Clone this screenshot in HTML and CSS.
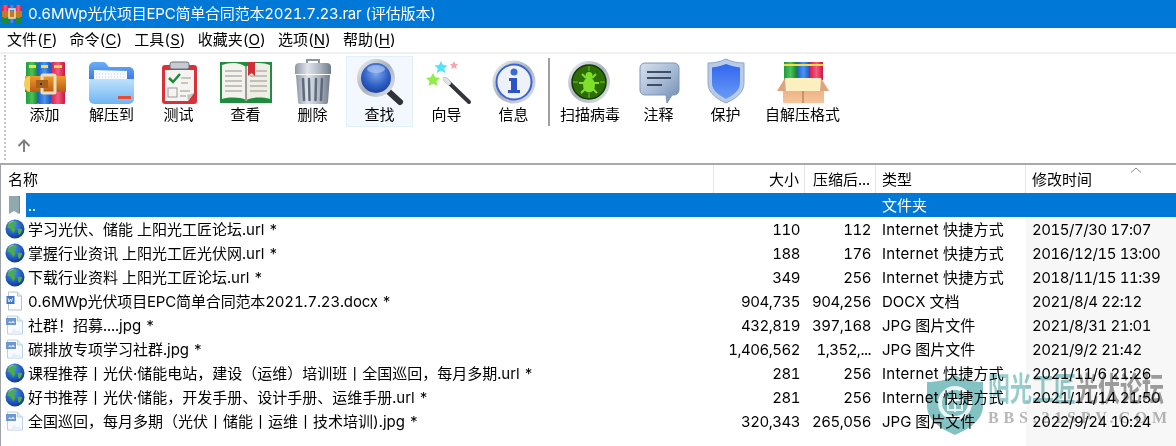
FILE: index.html
```html
<!DOCTYPE html>
<html lang="zh">
<head>
<meta charset="utf-8">
<title>0.6MWp光伏项目EPC简单合同范本2021.7.23.rar</title>
<link rel="stylesheet" href="styles.css">
</head>
<body>
<svg class="defs" width="0" height="0" aria-hidden="true">
  <defs>
    <linearGradient id="gGreen" x1="0" x2="1" y1="0" y2="0"><stop offset="0" stop-color="#1f9a3c"/><stop offset=".5" stop-color="#4cc35a"/><stop offset="1" stop-color="#158033"/></linearGradient>
    <linearGradient id="gBlue" x1="0" x2="1" y1="0" y2="0"><stop offset="0" stop-color="#1d5fd0"/><stop offset=".5" stop-color="#4b93ee"/><stop offset="1" stop-color="#1a55c0"/></linearGradient>
    <linearGradient id="gPink" x1="0" x2="1" y1="0" y2="0"><stop offset="0" stop-color="#d91c4c"/><stop offset=".5" stop-color="#f55a80"/><stop offset="1" stop-color="#c9173f"/></linearGradient>
    <linearGradient id="gBelt" x1="0" x2="0" y1="0" y2="1"><stop offset="0" stop-color="#f09a2c"/><stop offset="1" stop-color="#b85c14"/></linearGradient>
    <linearGradient id="gFolder" x1="0" x2="0" y1="0" y2="1"><stop offset="0" stop-color="#bfe2fb"/><stop offset="1" stop-color="#6fb5f4"/></linearGradient>
    <linearGradient id="gFolderBack" x1="0" x2="0" y1="0" y2="1"><stop offset="0" stop-color="#6aaef5"/><stop offset="1" stop-color="#3a78e6"/></linearGradient>
    <linearGradient id="gMetal" x1="0" x2="1" y1="0" y2="0"><stop offset="0" stop-color="#8d99a8"/><stop offset=".35" stop-color="#dfe4ea"/><stop offset=".7" stop-color="#aab3bf"/><stop offset="1" stop-color="#6f7a89"/></linearGradient>
    <radialGradient id="gLens" cx=".5" cy=".35" r=".7"><stop offset="0" stop-color="#7fa8ee"/><stop offset=".6" stop-color="#2d5fc4"/><stop offset="1" stop-color="#1a3a96"/></radialGradient>
    <linearGradient id="gRing" x1="0" x2="1" y1="0" y2="1"><stop offset="0" stop-color="#f1f3f7"/><stop offset=".5" stop-color="#a8b0bd"/><stop offset="1" stop-color="#e6e9ee"/></linearGradient>
    <linearGradient id="gBubble" x1="0" x2="1" y1="0" y2="1"><stop offset="0" stop-color="#d5e0ef"/><stop offset=".55" stop-color="#a3b7d3"/><stop offset="1" stop-color="#6f88ad"/></linearGradient>
    <linearGradient id="gShield" x1="0" x2="0" y1="0" y2="1"><stop offset="0" stop-color="#2f66ee"/><stop offset="1" stop-color="#6b9bf7"/></linearGradient>
    <linearGradient id="gBox" x1="0" x2="0" y1="0" y2="1"><stop offset="0" stop-color="#eeb386"/><stop offset="1" stop-color="#f8c49c"/></linearGradient>
    <radialGradient id="gGlobe" cx=".4" cy=".3" r=".8"><stop offset="0" stop-color="#4d96ef"/><stop offset=".7" stop-color="#1a4db0"/><stop offset="1" stop-color="#0c2a74"/></radialGradient>
    <symbol id="globe" viewBox="0 0 20 20">
      <circle cx="10" cy="10" r="9.500" fill="url(#gGlobe)"/>
      <path d="M5 3.500c2-1.500 5-1.800 7-1l-1 2.500-2 .5-.5 2.500 2 1.500-1 3-1.500 2-1-3-2.500-2.500-2-.5c.2-2 1-4 2.500-5.500z" fill="#4aae45"/>
      <path d="M12.500 9.500l4.500.5c.3 2-1 4.500-3 6l-1-2.500z" fill="#4aae45"/>
      <path d="M3.500 5a8 8 0 0 1 5-3" fill="none" stroke="#cfe5ff" stroke-opacity=".6"/>
    </symbol>
    <symbol id="imgfile" viewBox="0 0 20 20">
      <path d="M2.500 1h10l5 5v13h-15z" fill="#f8fbfe" stroke="#bcd0e6"/>
      <path d="M12.500 1v5h5" fill="#dfeaf6" stroke="#bcd0e6"/>
      <rect x="1" y="3" width="10" height="7" fill="#6d97d0"/>
      <path d="M3 8l2-2 1.500 1.500 1.500-2 2 2.500z" fill="#d9e6f6"/>
      <path d="M5 19l4-5 3 2.500 2-1.500 3 4z" fill="#e4eefa"/>
    </symbol>
  </defs>
</svg>
<div class="app">
  <header class="titlebar">
    <svg class="title-icon" viewBox="0 0 20 18" width="20" height="18" aria-hidden="true">
      <rect x="0" y="0" width="7" height="18" fill="url(#gPink)"/>
      <rect x="7" y="0" width="6" height="18" fill="url(#gBlue)"/>
      <rect x="13" y="0" width="7" height="18" fill="url(#gPink)"/>
      <rect x="0" y="13" width="7" height="5" fill="#1c8a3a"/>
      <rect x="13" y="13" width="7" height="5" fill="#1c8a3a"/>
      <rect x="0" y="6" width="20" height="6" fill="#c47a1f"/>
      <rect x="7" y="4" width="6" height="9" fill="none" stroke="#efe2b8" stroke-width="1.500"/>
    </svg>
    <span class="title-text">0.6MWp光伏项目EPC简单合同范本2021.7.23.rar (评估版本)</span>
  </header>

  <nav class="menubar">
    <span class="menu-item">文件(<u>F</u>)</span>
    <span class="menu-item">命令(<u>C</u>)</span>
    <span class="menu-item">工具(<u>S</u>)</span>
    <span class="menu-item">收藏夹(<u>O</u>)</span>
    <span class="menu-item">选项(<u>N</u>)</span>
    <span class="menu-item">帮助(<u>H</u>)</span>
  </nav>

  <section class="toolbar">
    <div class="gripper"></div>
    <div class="tool-area">
      <div class="tool-row">
        <div class="tool">
          <svg class="tool-icon" viewBox="0 0 48 48" aria-hidden="true">
            <rect x="5" y="3" width="12" height="42" rx="1" fill="url(#gGreen)"/>
            <rect x="17" y="3" width="13" height="42" rx="1" fill="url(#gBlue)"/>
            <rect x="30" y="3" width="14" height="42" rx="1" fill="url(#gPink)"/>
            <rect x="8" y="6" width="7" height="3" fill="#f3de4a"/>
            <rect x="20" y="6" width="7" height="3" fill="#f3de4a"/>
            <rect x="33" y="6" width="8" height="3" fill="#f3de4a"/>
            <rect x="4" y="17" width="41" height="16" fill="url(#gBelt)"/>
            <path d="M9 17a6 8 0 0 0 0 16z" fill="#f3cf5a"/>
            <rect x="21" y="16" width="13" height="18" rx="1" fill="none" stroke="#e9dfc0" stroke-width="3"/>
            <rect x="15" y="21" width="12" height="8" fill="#a8601a"/>
            <circle cx="20" cy="25" r="1" fill="#2b1a08"/>
          </svg>
          <span class="tool-label">添加</span>
        </div>
        <div class="tool">
          <svg class="tool-icon" viewBox="0 0 48 48" aria-hidden="true">
            <path d="M1 8a5 5 0 0 1 5-5h9c3 0 4 3 6 5h20a5 5 0 0 1 5 5v8H1z" fill="url(#gFolderBack)"/>
            <path d="M6 11l33 1v18H6z" fill="#f6f9fd"/>
            <path d="M8 15h29M8 18h29" stroke="#c7d3e2" stroke-dasharray="1 2"/>
            <path d="M1 20h45v20a5 5 0 0 1-5 5H6a5 5 0 0 1-5-5z" fill="url(#gFolder)"/>
            <rect x="30" y="37" width="13" height="3" fill="#e64b34"/>
          </svg>
          <span class="tool-label">解压到</span>
        </div>
        <div class="tool">
          <svg class="tool-icon" viewBox="0 0 48 48" aria-hidden="true">
            <rect x="7" y="6" width="35" height="39" rx="3" fill="#d8313c"/>
            <path d="M10 11h29v23l-6 8H10z" fill="#f6f4f0"/>
            <path d="M33 42l6-8-7 2z" fill="#c9c5bd"/>
            <rect x="15" y="3" width="19" height="7" rx="2" fill="#c5cbd0" stroke="#6f747a"/>
            <path d="M14 19l4 4 7-8" fill="none" stroke="#1f8a3d" stroke-width="2.500"/>
            <rect x="13" y="29" width="9" height="9" fill="#f6f4f0" stroke="#9a9a9a"/>
            <path d="M26 19h10M26 24h7M25 32h10M25 37h6" stroke="#b9b5ad" stroke-width="1.500"/>
          </svg>
          <span class="tool-label">测试</span>
        </div>
        <div class="tool">
          <svg class="tool-icon" viewBox="0 0 48 48" aria-hidden="true">
            <path d="M-2 3h52v41H-2z" fill="#1f8c3f"/>
            <path d="M0 6c8-3 18-3 24 2v33c-6-3-16-3-24-1z" fill="#f3f2ec"/>
            <path d="M48 6c-8-3-18-3-24 2v33c6-3 16-3 24-1z" fill="#eeeee7"/>
            <path d="M3 12h17M3 17h17M3 22h17M3 27h17M3 32h17M34 12h11M28 17h17M28 22h17M28 27h17M28 32h17" stroke="#b3b3ac" stroke-width="1.500"/>
            <path d="M26 3h7v14l-3.500-3-3.500 3z" fill="#cf3035"/>
            <path d="M23 8h2v34h-2z" fill="#9c9c94"/>
          </svg>
          <span class="tool-label">查看</span>
        </div>
        <div class="tool">
          <svg class="tool-icon" viewBox="0 0 48 48" aria-hidden="true">
            <path d="M18 4V1h12v3" fill="none" stroke="#8996a6" stroke-width="2"/>
            <path d="M6 8c0-3 2-4 4-4h28c2 0 4 1 4 4v7H6z" fill="url(#gMetal)"/>
            <path d="M7 16h34l-2 27a2 2 0 0 1-2 2H11a2 2 0 0 1-2-2z" fill="url(#gMetal)"/>
            <path d="M14 20l1 21M20 20l.5 21M27 20l-.5 21M33 20l-1 21" stroke="#5f6b7b" stroke-width="2.500" stroke-linecap="round"/>
          </svg>
          <span class="tool-label">删除</span>
        </div>
        <div class="tool tool-active">
          <svg class="tool-icon" viewBox="0 0 48 48" aria-hidden="true">
            <path d="M32 32l12 11" stroke="#2f3236" stroke-width="6" stroke-linecap="round"/>
            <circle cx="20" cy="19" r="19" fill="url(#gRing)"/>
            <circle cx="20" cy="19" r="15" fill="url(#gLens)"/>
            <ellipse cx="20" cy="10" rx="9" ry="4" fill="#bcd2f7" fill-opacity=".6"/>
          </svg>
          <span class="tool-label">查找</span>
        </div>
        <div class="tool">
          <svg class="tool-icon" viewBox="0 0 48 48" aria-hidden="true">
            <path d="M18 2l2 4 4.500.5-3.200 3 .9 4.500-4.200-2.200-4.200 2.200.9-4.500-3.200-3 4.500-.5z" fill="#55e3f5"/>
            <path d="M31 2l1.300 2.700 3 .4-2.200 2 .6 3-2.700-1.500-2.700 1.500.6-3-2.200-2 3-.4z" fill="#f5a6ac"/>
            <path d="M10 14l2.200 4.300 4.800.6-3.500 3.300 1 4.800-4.500-2.300-4.500 2.300 1-4.800L3 18.900l4.800-.6z" fill="#93ec4c"/>
            <path d="M22 20l24 23" stroke="#33363a" stroke-width="4" stroke-linecap="round"/>
            <path d="M22 20l4 4" stroke="#dfe3e8" stroke-width="4" stroke-linecap="round"/>
          </svg>
          <span class="tool-label">向导</span>
        </div>
        <div class="tool">
          <svg class="tool-icon" viewBox="0 0 48 48" aria-hidden="true">
            <circle cx="24" cy="23" r="21.500" fill="url(#gRing)"/>
            <circle cx="24" cy="23" r="17.500" fill="#eef1f7" stroke="#3a64d0" stroke-width="2"/>
            <circle cx="24" cy="13" r="3.500" fill="#3a6ad8"/>
            <path d="M19 19h8v12h3v3H18v-3h3v-9h-2z" fill="#2b55c4"/>
          </svg>
          <span class="tool-label">信息</span>
        </div>
        <div class="tool-sep"></div>
        <div class="tool tool-scan">
          <svg class="tool-icon" viewBox="0 0 48 48" aria-hidden="true">
            <circle cx="23" cy="23" r="21" fill="url(#gRing)"/>
            <circle cx="23" cy="23" r="17" fill="#2d6d08" stroke="#123c03" stroke-width="1.500"/>
            <path d="M23 7v5M23 34v5M7 23h5M34 23h5" stroke="#5aa81c" stroke-width="1.500"/>
            <ellipse cx="23" cy="26" rx="6" ry="7.500" fill="#7ee02a"/>
            <circle cx="23" cy="16.500" r="3.500" fill="#7ee02a"/>
            <path d="M16 15l4 4M30 15l-4 4M13 24h5M33 24h-5M15 34l4-4M31 34l-4-4" stroke="#7ee02a" stroke-width="2"/>
          </svg>
          <span class="tool-label">扫描病毒</span>
        </div>
        <div class="tool">
          <svg class="tool-icon" viewBox="0 0 48 48" aria-hidden="true">
            <path d="M10 4h29a5 5 0 0 1 5 5v22a5 5 0 0 1-5 5h-2l-5 8-1-8H10a5 5 0 0 1-5-5V9a5 5 0 0 1 5-5z" fill="url(#gBubble)" stroke="#7e94b6"/>
            <path d="M12 13h24M12 19h24M12 26h15" stroke="#3f4d66" stroke-width="2"/>
          </svg>
          <span class="tool-label">注释</span>
        </div>
        <div class="tool">
          <svg class="tool-icon" viewBox="0 0 48 48" aria-hidden="true">
            <path d="M24 0c6 3 12 4 18 4v20c0 10-9 16-18 20C15 40 6 34 6 24V4c6 0 12-1 18-4z" fill="#b9cbe6" stroke="#90a7c8"/>
            <path d="M24 5c5 2 9 3 14 3.500V24c0 8-7 12-14 16-7-4-14-8-14-16V8.500C15 8 19 7 24 5z" fill="url(#gShield)"/>
          </svg>
          <span class="tool-label">保护</span>
        </div>
        <div class="tool tool-wide">
          <svg class="tool-icon" viewBox="0 0 48 48" aria-hidden="true">
            <rect x="5" y="3" width="13" height="18" fill="url(#gGreen)"/>
            <rect x="18" y="3" width="13" height="18" fill="url(#gBlue)"/>
            <rect x="31" y="3" width="13" height="18" fill="url(#gPink)"/>
            <path d="M5 6h13M18 6h13M31 6h13" stroke="#f3de4a" stroke-width="2"/>
            <path d="M6 19h36l-1 13H8z" fill="#fcefc0"/>
            <path d="M6 19L-2 32h9zM42 19l8 13h-9z" fill="#e0a47c"/>
            <rect x="4" y="32" width="41" height="12" fill="url(#gBox)"/>
            <path d="M24 32v12" stroke="#a8683e"/>
          </svg>
          <span class="tool-label">自解压格式</span>
        </div>
      </div>
      <div class="tool-row2">
        <svg class="up-arrow" viewBox="0 0 16 16" width="16" height="16" aria-hidden="true">
          <path d="M8 14V3M2.500 8L8 2.500 13.500 8" fill="none" stroke="#7f7f7f" stroke-width="2"/>
        </svg>
      </div>
    </div>
  </section>

  <main class="list">
    <div class="row head">
      <div class="cell name">名称</div>
      <div class="cell num">大小</div>
      <div class="cell num">压缩后...</div>
      <div class="cell type">类型</div>
      <div class="cell date">修改时间<svg class="sort" viewBox="0 0 12 6" width="12" height="6" aria-hidden="true"><path d="M1 5.500L6 1l5 4.500" fill="none" stroke="#8a8a8a"/></svg></div>
    </div>
    <div class="row selected">
      <div class="cell name">
        <svg class="file-icon" viewBox="0 0 20 20" aria-hidden="true"><path d="M4 1h7l3 2v16l-5-3-5 3z" fill="#8fa9ad"/><path d="M11 1h4v17l-1 1V3z" fill="#6f8f95"/></svg>
        <span class="name-text">..</span>
      </div>
      <div class="cell num"></div>
      <div class="cell num"></div>
      <div class="cell type">文件夹</div>
      <div class="cell date"></div>
    </div>
    <div class="row">
      <div class="cell name"><svg class="file-icon"><use href="#globe"/></svg><span class="name-text">学习光伏、储能 上阳光工匠论坛.url *</span></div>
      <div class="cell num">110</div><div class="cell num">112</div>
      <div class="cell type type-wide">Internet 快捷方式</div><div class="cell date">2015/7/30 17:07</div>
    </div>
    <div class="row">
      <div class="cell name"><svg class="file-icon"><use href="#globe"/></svg><span class="name-text">掌握行业资讯 上阳光工匠光伏网.url *</span></div>
      <div class="cell num">188</div><div class="cell num">176</div>
      <div class="cell type type-wide">Internet 快捷方式</div><div class="cell date">2016/12/15 13:00</div>
    </div>
    <div class="row">
      <div class="cell name"><svg class="file-icon"><use href="#globe"/></svg><span class="name-text">下载行业资料 上阳光工匠论坛.url *</span></div>
      <div class="cell num">349</div><div class="cell num">256</div>
      <div class="cell type type-wide">Internet 快捷方式</div><div class="cell date">2018/11/15 11:39</div>
    </div>
    <div class="row">
      <div class="cell name">
        <svg class="file-icon" viewBox="0 0 20 20" aria-hidden="true"><path d="M3.500 1h9l4 4v14h-13z" fill="#fbfcfe" stroke="#b9c2cd"/><path d="M12.500 1v4h4" fill="#e8edf3" stroke="#b9c2cd"/><rect x="1.500" y="5" width="8" height="8" fill="#3f78c8"/><path d="M3 7l1 4 1.500-3 1 3 1-4" fill="none" stroke="#fff" stroke-width=".8"/></svg>
        <span class="name-text name-tight">0.6MWp光伏项目EPC简单合同范本2021.7.23.docx *</span>
      </div>
      <div class="cell num">904,735</div><div class="cell num">904,256</div>
      <div class="cell type">DOCX 文档</div><div class="cell date">2021/8/4 22:12</div>
    </div>
    <div class="row">
      <div class="cell name"><svg class="file-icon"><use href="#imgfile"/></svg><span class="name-text">社群！招募....jpg *</span></div>
      <div class="cell num">432,819</div><div class="cell num">397,168</div>
      <div class="cell type">JPG 图片文件</div><div class="cell date">2021/8/31 21:01</div>
    </div>
    <div class="row">
      <div class="cell name"><svg class="file-icon"><use href="#imgfile"/></svg><span class="name-text">碳排放专项学习社群.jpg *</span></div>
      <div class="cell num">1,406,562</div><div class="cell num">1,352,...</div>
      <div class="cell type">JPG 图片文件</div><div class="cell date">2021/9/2 21:42</div>
    </div>
    <div class="row">
      <div class="cell name"><svg class="file-icon"><use href="#globe"/></svg><span class="name-text">课程推荐丨光伏·储能电站，建设（运维）培训班丨全国巡回，每月多期.url *</span></div>
      <div class="cell num">281</div><div class="cell num">256</div>
      <div class="cell type type-wide">Internet 快捷方式</div><div class="cell date">2021/11/6 21:26</div>
    </div>
    <div class="row">
      <div class="cell name"><svg class="file-icon"><use href="#globe"/></svg><span class="name-text">好书推荐丨光伏·储能，开发手册、设计手册、运维手册.url *</span></div>
      <div class="cell num">281</div><div class="cell num">256</div>
      <div class="cell type type-wide">Internet 快捷方式</div><div class="cell date">2021/11/14 21:50</div>
    </div>
    <div class="row">
      <div class="cell name"><svg class="file-icon"><use href="#imgfile"/></svg><span class="name-text">全国巡回，每月多期（光伏丨储能丨运维丨技术培训).jpg *</span></div>
      <div class="cell num">320,343</div><div class="cell num">265,056</div>
      <div class="cell type">JPG 图片文件</div><div class="cell date">2022/9/24 10:24</div>
    </div>
    <div class="row filler">
      <div class="cell name"></div><div class="cell num"></div><div class="cell num"></div><div class="cell type"></div><div class="cell date"></div>
    </div>
  </main>

  <div class="watermark">
    <svg class="wm-shield" viewBox="0 0 60 62" width="60" height="62" aria-hidden="true">
      <path d="M2 8c10 0 20-2 28-7 8 5 18 7 28 7v24c0 14-14 23-28 29C16 55 2 46 2 32z" fill="#4ea8a8"/>
      <circle cx="30" cy="29" r="15" fill="none" stroke="#e3f2f2" stroke-width="4"/>
      <path d="M30 20v18M23 26h14v10H23z" fill="none" stroke="#e3f2f2" stroke-width="2"/>
    </svg>
    <div class="wm-text">
      <div class="wm-cn"><span class="wm-teal">阳光工匠</span><span class="wm-gray">光伏论坛</span></div>
      <div class="wm-en">BBS.21SPV.COM</div>
    </div>
  </div>
</div>
</body>
</html>
```
FILE: styles.css
```css
* { box-sizing: border-box; }
html, body { margin: 0; padding: 0; }
body {
  width: 1176px;
  height: 446px;
  overflow: hidden;
  background: #fff;
  color: #000;
  font: 15px/20px "Inter", "Noto Sans CJK SC", sans-serif;
  font-variant-numeric: tabular-nums;
}
.defs { position: absolute; }
.app {
  position: relative;
  display: flex;
  flex-direction: column;
  width: 1176px;
  height: 446px;
  overflow: hidden;
}
.titlebar {
  display: flex;
  align-items: center;
  flex: 0 0 28px;
  gap: 6px;
  padding-left: 2px;
  background: #0078d7;
  color: #fff;
}
.title-icon { flex: none; }
.title-text { letter-spacing: -.2px; }
.menubar {
  display: flex;
  flex: 0 0 26px;
  align-items: center;
  gap: 12px;
  padding-left: 7px;
  background: #fff;
  border-bottom: 2px solid #f0f0f0;
}
.menu-item u { text-underline-offset: 2px; }
.toolbar {
  display: flex;
  flex: 0 0 111px;
  border-bottom: 2px solid #a9a9a9;
}
.gripper {
  flex: 0 0 7px;
  margin: 1px 0 3px 4px;
  border-left: 2px dotted #c8c8c8;
}
.tool-area { flex: 1; display: flex; flex-direction: column; }
.tool-row { display: flex; height: 73px; padding-top: 2px; }
.tool {
  display: flex;
  flex-direction: column;
  align-items: center;
  flex: none;
  min-width: 67px;
  height: 71px;
  padding: 3px 3px 0;
  border: 1px solid transparent;
}
.tool-active { background: #f2f8fd; border-color: #e3eff9; }
.tool-icon { flex: none; width: 48px; height: 48px; overflow: visible; margin-top: -1px; }
.tool-label { white-space: nowrap; margin-top: -2px; }
.tool-scan { min-width: 70px; }
.tool-wide { min-width: 87px; }
.tool-sep {
  flex: none;
  width: 2px;
  height: 68px;
  margin: 2px 5px 0 1px;
  background: #a0a0a0;
}
.tool-row2 { padding: 11px 0 0 5px; }
.up-arrow { display: block; }
.list {
  flex: 1;
  display: flex;
  flex-direction: column;
  min-height: 0;
  border-left: 1px solid #a0a4a8;
}
.row {
  display: grid;
  grid-template-columns: 713px 91px 71px 150px 150px;
  grid-template-rows: 24px;
  flex: 0 0 24px;
  line-height: 26px;
}
.cell { white-space: nowrap; overflow: hidden; }
.name { display: flex; align-items: flex-start; padding-left: 4px; }
.file-icon { flex: none; width: 20px; height: 20px; margin: 2px 3px 0 0; overflow: visible; }
.name-text { display: block; flex: 1; padding-left: 0; }
.name-tight { letter-spacing: -.15px; }
.num { text-align: right; padding-right: 5px; letter-spacing: -.5px; }
.type { padding-left: 6px; }
.type-wide { letter-spacing: .25px; }
.date { padding-left: 6px; background: #f7f7f7; letter-spacing: -.45px; }
.head { flex-basis: 28px; grid-template-rows: 28px; line-height: 30px; }
.head .cell { border-right: 1px solid #e5e5e5; background: #fff; position: relative; letter-spacing: 0; }
.head .date { border-right: 0; }
.head .name { padding-left: 7px; }
.sort { position: absolute; top: 2px; left: 104px; }
.selected { background: #0078d7; color: #fff; }
.selected .name { background: #fff; }
.selected .name-text { background: #0078d7; padding-left: 2px; }
.selected .file-icon { margin-right: 1px; }
.selected .date { background: transparent; }
.filler { flex: 1; }
.watermark {
  position: absolute;
  left: 925px;
  top: 374px;
  display: flex;
  gap: 3px;
  pointer-events: none;
  opacity: .7;
  mix-blend-mode: multiply;
}
.wm-text { display: flex; flex-direction: column; width: 180px; }
.wm-cn {
  display: flex;
  margin-top: -2px;
  font-size: 22px;
  line-height: 22px;
  font-weight: 700;
  height: 36px;
  transform: scaleY(1.5);
  transform-origin: top left;
}
.wm-teal { color: #6bb8b8; }
.wm-gray { color: #777; }
.wm-en {
  margin-top: 3px;
  font: 700 16px/14px "Liberation Serif", serif;
  letter-spacing: 4.800px;
  color: #999;
  white-space: nowrap;
}
```
